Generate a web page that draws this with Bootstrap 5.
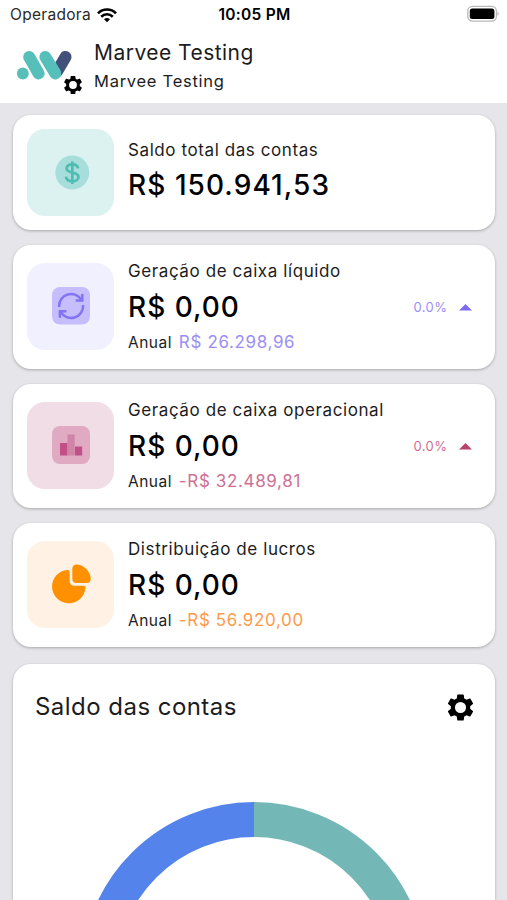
<!DOCTYPE html>
<html lang="pt-BR">
<head>
<meta charset="utf-8">
<meta name="viewport" content="width=device-width, initial-scale=1">
<title>Marvee Testing</title>
<link rel="stylesheet" href="https://cdn.jsdelivr.net/npm/bootstrap@5.3.0/dist/css/bootstrap.min.css">
<style>
body{font-family:Inter,"Liberation Sans",sans-serif;background:#e6e6ea;color:#1c1c1e;height:900px;overflow:hidden}
.topbar{height:103px}
.statusline{height:30px;font-size:15.5px;line-height:30px;padding:0 8px 0 10px}
.carrier{letter-spacing:.3px;color:#2a2a2a}
.clock{letter-spacing:.25px}
.side{flex:1 1 0}
.brand{width:84px;height:60px;margin-left:10px;margin-top:8px}
.org{font-size:21px;line-height:28px;letter-spacing:.47px;margin-top:9px}
.user{font-size:16.5px;line-height:24px;letter-spacing:.73px;margin-top:2px}
.feed{padding:12px 12.5px 0 13px}
.panel{border:0;border-radius:18px;box-shadow:0 1px 3px rgba(0,0,0,.28)}
.kpi{height:124px;margin-bottom:15px;padding:0 23px 0 14px}
.kpi-first{height:115px}
.tile{width:87px;height:87px;border-radius:18px;margin-right:14px}
.kpi:not(.kpi-first) .tile{margin-bottom:1px}
.tile-teal{background:#dcf2f0}.tile-violet{background:#f1f0ff}.tile-rose{background:#f0dde6}.tile-orange{background:#fff2e5}
.lbl{font-size:17px;line-height:22px;letter-spacing:.59px}
.val{font-size:28px;line-height:34px;letter-spacing:1px;font-weight:450;color:#000;margin:8px 0 7px}
.kpi-first .val{margin:7px 0 4px;letter-spacing:1.07px}
.year{font-size:15.5px;line-height:22px;letter-spacing:.5px}
.amount{font-size:17px;letter-spacing:.64px;margin-left:2px}
.pct{font-size:13px;letter-spacing:.45px;margin-right:11px;padding-top:1px}
.violet{color:#9c8ef5}.rose{color:#cd7094}.orange{color:#ff9a4d}
.chart{margin-top:17px;height:236px;padding:28px 21px 0 22px;border-radius:18px 18px 0 0}
.chart h2{font-size:24px;line-height:30px;letter-spacing:.46px;margin:0;font-weight:400}
.ring{margin-top:80px}
</style>
</head>
<body>
<svg class="d-none"><symbol id="gear" viewBox="2 2 20 20"><path fill-rule="evenodd" d="M19.140 12.940c.04-.3.060-.61.060-.94 0-.32-.02-.64-.07-.94l2.030-1.580c.18-.14.230-.41.120-.61l-1.920-3.320c-.12-.22-.37-.29-.59-.22l-2.390.960c-.5-.38-1.030-.7-1.620-.94l-.36-2.540c-.04-.24-.24-.41-.48-.41h-3.840c-.24 0-.43.170-.47.410l-.36 2.540c-.59.240-1.130.570-1.620.940l-2.390-.96c-.22-.08-.47 0-.59.220L2.740 8.870c-.12.210-.08.470.120.610l2.030 1.580c-.05.300-.09.630-.09.940s.02.640.070.940l-2.030 1.580c-.18.140-.23.410-.12.610l1.920 3.320c.12.220.37.290.59.220l2.390-.96c.5.380 1.030.700 1.620.940l.36 2.540c.05.240.24.410.48.410h3.840c.24 0 .44-.17.470-.41l.36-2.540c.59-.24 1.130-.56 1.620-.94l2.390.960c.22.080.470 0 .59-.22l1.920-3.320c.12-.22.070-.47-.12-.61zM12 16.100a4.100 4.100 0 1 1 0-8.200 4.100 4.100 0 0 1 0 8.200z"/></symbol></svg>
<header class="topbar bg-white">
  <div class="statusline d-flex text-black">
    <div class="side d-flex align-items-center"><span class="carrier">Operadora</span>
      <svg width="20" height="15" viewBox="0 0 20 15" fill="none" stroke="#000" stroke-width="2.6" style="margin-left:6px"><path d="M1 5.300C6 .3 14 .3 19 5.300M4.200 8.700c3.300-3.200 8.300-3.200 11.600 0"/><path d="M10 14.300l-3-3c1.700-1.600 4.300-1.600 6 0z" fill="#000" stroke="none"/></svg>
    </div>
    <span class="clock fw-semibold">10:05 PM</span>
    <div class="side d-flex align-items-center justify-content-end">
      <svg class="mb-1" width="32" height="17" viewBox="0 0 32 17"><rect x=".8" y="1.300" width="28.600" height="14.800" rx="4.500" fill="#fff" stroke="#b9b9b7" stroke-width="1.300"/><rect x="2.800" y="3.400" width="24.600" height="10.600" rx="2.500"/><path d="M30.500 6.700v4q1.300-.5 1.300-2t-1.300-2z" fill="#b5b5b5"/></svg>
    </div>
  </div>
  <div class="d-flex">
    <svg class="brand" viewBox="10 38 84 60"><path d="M65.500 56.900L57 71.500" stroke="#43517a" stroke-width="12" stroke-linecap="round"/><g stroke="#57bfba" stroke-width="12" stroke-linecap="round"><path d="M29.200 57L38.600 73.400M45.400 57L55.300 73.400"/></g><circle cx="22.800" cy="73.500" r="5.900" fill="#57bfba"/><use href="#gear" x="63.500" y="75.500" width="19" height="19"/></svg>
    <div><div class="org">Marvee Testing</div><div class="user">Marvee Testing</div></div>
  </div>
</header>
<main class="feed">
  <section class="card panel kpi kpi-first flex-row align-items-center">
    <svg class="tile tile-teal" viewBox="27 129 87 87"><circle cx="72.300" cy="172.500" r="17" fill="#a7dedb"/><path d="M78.100 168.400c-.4-2.600-2.700-4.100-5.800-4.100-3.300 0-5.700 1.600-5.700 4.200 0 5.600 11.900 2.500 11.900 8.500 0 2.700-2.700 4.400-6.100 4.400-3.500 0-6.100-1.700-6.400-4.700M72.300 161.500v22.600" fill="none" stroke="#4fbdb4" stroke-width="2.700"/></svg>
    <div><div class="lbl">Saldo total das contas</div><div class="val">R$ 150.941,53</div></div>
  </section>
  <section class="card panel kpi flex-row align-items-center">
    <svg class="tile tile-violet" viewBox="27 263.500 87 87"><rect x="52" y="287.500" width="38" height="37.500" rx="8" fill="#c5bdfc"/><g fill="none" stroke="#8375f2" stroke-width="2.500"><path d="M59.100 307.500a12 12 0 0 1 22.500-6.700M83.100 305.500a12 12 0 0 1-22.500 6.700"/><path d="M82.300 294.500v6.600h-6.600M59.900 318.300v-6.600h6.600"/></g></svg>
    <div><div class="lbl">Geração de caixa líquido</div><div class="val">R$ 0,00</div><div class="year">Anual <span class="amount violet">R$ 26.298,96</span></div></div>
    <div class="ms-auto d-flex align-items-center violet"><span class="pct">0.0%</span><svg width="13" height="7" viewBox="0 0 13 7"><path d="M0 6.500L6.500 0 13 6.500z" fill="#7c6cf0"/></svg></div>
  </section>
  <section class="card panel kpi flex-row align-items-center">
    <svg class="tile tile-rose" viewBox="27 402.500 87 87"><rect x="52" y="426.500" width="38" height="38" rx="8" fill="#dfaac2"/><path d="M60 443.500h7.500V456H60zM75 447h7.200v9H75z" fill="#c24f85"/><path d="M67.500 435h7.200v21h-7.200z" fill="#cf84a8"/></svg>
    <div><div class="lbl">Geração de caixa operacional</div><div class="val">R$ 0,00</div><div class="year">Anual <span class="amount rose">-R$ 32.489,81</span></div></div>
    <div class="ms-auto d-flex align-items-center rose"><span class="pct">0.0%</span><svg width="13" height="7" viewBox="0 0 13 7"><path d="M0 6.500L6.500 0 13 6.500z" fill="#b94468"/></svg></div>
  </section>
  <section class="card panel kpi flex-row align-items-center">
    <svg class="tile tile-orange" viewBox="27 541.500 87 87"><path d="M67.500 570.400q2.200-.2 2.200 2v9.200q0 4.700 4.700 4.700h8.800q2.500 0 2.200 2.400A16.700 16.700 0 1 1 67.500 570.400z" fill="#ff9100"/><path d="M72.300 569.500q0-4.800 5-4.600c6.500.5 12.500 6.500 13.400 13.400q.4 5.200-4.300 5.200H76.500q-4.200 0-4.200-4.200z" fill="#ff9100"/></svg>
    <div><div class="lbl">Distribuição de lucros</div><div class="val">R$ 0,00</div><div class="year">Anual <span class="amount orange">-R$ 56.920,00</span></div></div>
  </section>
  <section class="card panel chart">
    <div class="d-flex align-items-center justify-content-between"><h2>Saldo das contas</h2><svg width="27" height="27"><use href="#gear"/></svg></div>
    <svg class="ring w-100" height="98" viewBox="35 802 438.500 98" fill="none" stroke-width="35"><path d="M254 819.500a155.500 155.500 0 0 0 0 311" stroke="#5383eb"/><path d="M254 819.500a155.500 155.500 0 0 1 0 311" stroke="#73b8b6"/></svg>
  </section>
</main>
<script src="https://cdn.jsdelivr.net/npm/bootstrap@5.3.0/dist/js/bootstrap.bundle.min.js"></script>
</body>
</html>
